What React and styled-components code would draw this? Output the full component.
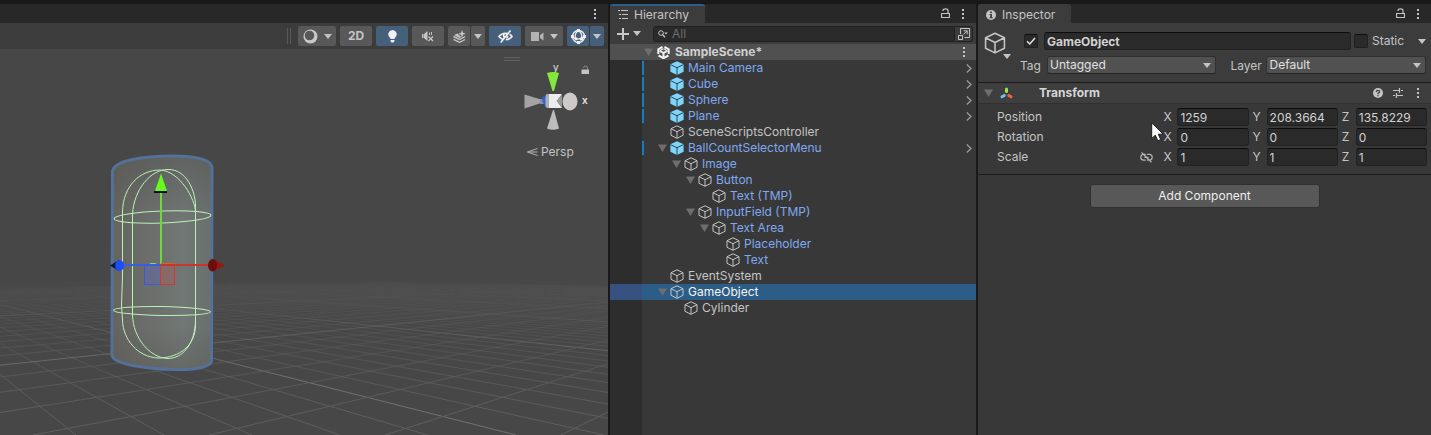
import React from "react";
import styled, { createGlobalStyle, css } from "styled-components";

const Global = createGlobalStyle`
  *, *::before, *::after { box-sizing: border-box; }
  body { margin: 0; background: #191919; }
  body, button, input, select {
    font-family: Inter, "Liberation Sans", sans-serif;
    font-size: 12px;
    line-height: 16px;
    color: #c4c4c4;
  }
  button { margin: 0; padding: 0; border: 0; background: none; }
  svg { display: block; flex: none; }
`;

/* ---------- shell ---------- */

const Editor = styled.main`
  display: grid;
  grid-template-columns: 608fr 366fr 453fr;
  column-gap: 2px;
  min-height: 100vh;
  padding-top: 4px;
  background: #191919;
`;

const Panel = styled.section`
  display: flex;
  flex-direction: column;
  min-width: 0;
  background: #383838;
`;

const TabBar = styled.header`
  display: flex;
  align-items: center;
  height: 19px;
  background: #282828;
`;

const Tab = styled.button`
  display: flex;
  align-items: center;
  gap: 6px;
  height: 19px;
  padding: 0 16px 0 8px;
  border-top: 2px solid ${(p) => (p.$focused ? "#2c5d87" : "#3c3c3c")};
  border-radius: 3px 3px 0 0;
  background: #3c3c3c;
`;

const TabTools = styled.div`
  display: flex;
  align-items: center;
  gap: 11px;
  margin-left: auto;
  padding-right: 11px;
`;

const IconButton = styled.button`
  display: flex;
  align-items: center;
  justify-content: center;
`;

/* ---------- scene ---------- */

const SceneToolbar = styled.div`
  display: flex;
  align-items: center;
  justify-content: flex-end;
  gap: 4px;
  height: 26px;
  padding: 0 4px;
  background: #3c3c3c;
`;

const Grip = styled.span`
  width: 4px;
  height: 16px;
  margin-right: 3px;
  border: solid #585858;
  border-width: 0 1px;
`;

const ToolButton = styled.button`
  display: flex;
  align-items: center;
  justify-content: center;
  gap: 6px;
  width: ${(p) => p.$w || 32}px;
  height: 20px;
  border-radius: 2px;
  font-weight: 700;
  background: ${(p) => (p.$on ? "#46607c" : "#585858")};
`;

const SplitGroup = styled.div`
  display: flex;
  gap: 1px;
`;

const Viewport = styled.div`
  position: relative;
  flex: 1;
  min-height: 0;
  overflow: hidden;
  background: #474747;
`;

const SceneArt = styled.svg`
  position: absolute;
  inset: 0;
  width: 100%;
  height: 100%;
`;

const Orientation = styled.div`
  position: absolute;
  top: 7px;
  right: 12px;
  display: flex;
  flex-direction: column;
  width: 92px;
`;

const Projection = styled.button`
  display: flex;
  align-items: center;
  gap: 3px;
  margin: 3px 0 0 23px;
`;

/* ---------- hierarchy ---------- */

const HierarchyTools = styled.div`
  display: flex;
  align-items: center;
  height: 21px;
  padding: 0 3px 0 7px;
  background: #3c3c3c;
`;

const CreateButton = styled(IconButton)`
  gap: 4px;
`;

const SearchBox = styled.label`
  display: flex;
  align-items: center;
  flex: 1;
  gap: 4px;
  height: 16px;
  margin-left: 12px;
  padding-left: 4px;
  border: 1px solid #202020;
  border-radius: 3px 0 0 3px;
  background: #2a2a2a;

  input {
    flex: 1;
    min-width: 0;
    height: 14px;
    padding: 0;
    border: 0;
    outline: 0;
    background: none;
  }
  input::placeholder { color: #6c6c6c; opacity: 1; }
`;

const PickerButton = styled(IconButton)`
  width: 18px;
  height: 16px;
  border: 1px solid #202020;
  border-left: 0;
  border-radius: 0 3px 3px 0;
`;

const Tree = styled.ul`
  flex: 1;
  margin: 0;
  padding: 0;
  list-style: none;
  background: linear-gradient(to right, #2d2d2d 32px, #383838 32px);
`;

const SceneRow = styled.li`
  display: flex;
  align-items: center;
  height: 16px;
  padding: 0 10px 0 34px;
  font-weight: 700;
  color: #d0d0d0;
  background: #505050;
`;

const SceneName = styled.span`
  flex: 1;
  margin-left: 5px;
`;

const Gutter = styled.span`
  align-self: stretch;
  width: 34px;
  margin-right: 14px;
  border-right: 2px solid transparent;
  ${(p) => p.$changed && css`
    background: linear-gradient(#0f81be, #0f81be) right 1px / 2px 14px no-repeat;
    background-origin: border-box;
    background-clip: border-box;
  `}
`;

const Fold = styled.span`
  display: flex;
  justify-content: center;
  width: 9px;
  margin-right: ${(p) => p.$gap || 3}px;
`;

const TreeRow = styled.li`
  display: flex;
  align-items: center;
  height: 16px;
  padding-right: 4px;
  color: ${(p) => (p.$selected ? "#f4f4f4" : p.$prefab ? "#7fa8f0" : "#c4c4c4")};
  ${(p) => p.$selected && css`
    background: linear-gradient(to right, #36507f 32px, #2c5d87 32px);
  `}
`;

const Indent = styled.span`
  width: ${(p) => p.$depth * 14}px;
`;

const RowName = styled.span`
  flex: 1;
  margin-left: 4px;
  white-space: nowrap;
`;

/* ---------- inspector ---------- */

const ObjectHeader = styled.div`
  display: grid;
  grid-template-columns: 28px minmax(0, 1fr);
  column-gap: 8px;
  padding: 9px 5px 8px 6px;
  background: #3c3c3c;
`;

const ObjectIcon = styled.button`
  display: flex;
  flex-direction: column;
  align-items: flex-end;
  align-self: start;
  padding-right: 1px;

  svg:first-child { align-self: flex-start; }
`;

const HeaderLines = styled.div`
  display: flex;
  flex-direction: column;
  gap: 6px;
`;

const HeaderLine = styled.div`
  display: flex;
  align-items: center;
  height: 18px;
`;

const fieldBox = css`
  height: 18px;
  border: 1px solid #212121;
  border-top-color: #0d0d0d;
  border-radius: 3px;
  background: #2a2a2a;
  color: #d2d2d2;
  outline: 0;
`;

const CheckBox = styled.span`
  position: relative;
  display: flex;
  flex: none;
  width: 14px;
  height: 14px;
  margin-left: ${(p) => (p.$lead ? 4 : 0)}px;

  input {
    appearance: none;
    width: 14px;
    height: 14px;
    margin: 0;
    border: 1px solid #212121;
    border-top-color: #0d0d0d;
    border-radius: 2px;
    background: #2a2a2a;
  }
  svg { position: absolute; inset: 0; display: none; pointer-events: none; }
  input:checked + svg { display: block; }
`;

const NameInput = styled.input`
  ${fieldBox}
  flex: 1;
  min-width: 0;
  margin: 0 3px 0 6px;
  padding: 0 2px;
  font-weight: 700;
`;

const StaticLabel = styled.label`
  width: 46px;
  margin-left: 4px;
`;

const FieldLabel = styled.label`
  width: ${(p) => p.$w}px;
  padding-top: 2px;
  padding-left: ${(p) => p.$lead || 0}px;
`;

const Dropdown = styled.span`
  position: relative;
  display: flex;
  flex: ${(p) => p.$grow} 0 0;
  align-items: center;

  select {
    appearance: none;
    width: 100%;
    height: 18px;
    padding: 0 18px 0 2px;
    border: 1px solid #303030;
    border-bottom-color: #242424;
    border-radius: 3px;
    background: #515151;
    color: #e0e0e0;
    line-height: 14px;
  }
  svg { position: absolute; right: 5px; pointer-events: none; }
`;

const ComponentHeader = styled.div`
  display: flex;
  align-items: center;
  height: 22px;
  padding: 0 8px 0 6px;
  border-top: 1px solid #1a1a1a;
  border-bottom: 1px solid #303030;
  background: #3e3e3e;

  h2 { flex: 1; margin: 0 0 0 24px; font-size: 12px; color: #d6d6d6; }
`;

const HeaderTools = styled.div`
  display: flex;
  align-items: center;
  gap: 10px;

  button { width: 10px; }
`;

const Properties = styled.div`
  display: flex;
  flex-direction: column;
  gap: 2px;
  padding: 4px 4px 8px 19px;
  border-bottom: 1px solid #1a1a1a;
`;

const PropertyRow = styled.div`
  position: relative;
  display: grid;
  grid-template-columns: 162fr 85fr 85fr 85fr;
  column-gap: 4px;
  align-items: center;
`;

const PropertyName = styled.span`
  display: flex;
  align-items: center;
  justify-content: space-between;
  padding-right: 6px;
`;

const AxisField = styled.label`
  display: flex;
  align-items: center;
  min-width: 0;

  span { width: 14px; }
  input { ${fieldBox} flex: 1; min-width: 0; padding: 0 2px; }
`;

const Pointer = styled.svg`
  position: absolute;
  top: 14px;
  left: 154px;
  z-index: 1;
`;

const AddComponent = styled.button`
  align-self: center;
  width: 51%;
  max-width: 230px;
  height: 24px;
  margin-top: 9px;
  border: 1px solid #303030;
  border-radius: 3px;
  background: #585858;
  color: #eeeeee;
`;

/* ---------- icons ---------- */

const Caret = ({ color = "#c4c4c4" }) => (
  <svg width="8" height="5" viewBox="0 0 8 5"><path d="M0 0h8L4 5z" fill={color} /></svg>
);

const FoldArrow = () => (
  <svg width="9" height="8" viewBox="0 0 9 8"><path d="M0 .5h9L4.500 8z" fill="#6e6e6e" /></svg>
);

const Dots = () => (
  <svg width="4" height="12" viewBox="0 0 4 12" fill="#c4c4c4">
    <path d="M1 1h2v2H1zM1 5h2v2H1zM1 9h2v2H1z" />
  </svg>
);

const Lock = () => (
  <svg width="9" height="11" viewBox="0 0 9 11" fill="none" stroke="#c4c4c4">
    <path d="M.5 5.500h8v4h-8zM2 3V2.500Q2 .8 4.500 .8T7 2.500V5.500" strokeWidth="1.200" />
  </svg>
);

const Cube = ({ prefab, size = 14 }) => (
  <svg width={size} height={size} viewBox="0 0 14 14" fill="none" strokeLinejoin="round">
    {prefab ? (
      <>
        <path d="M7 .2L13.600 3.300V10.700L7 14L.4 10.700V3.300z" fill="#7fd6fd" />
        <path d="M.5 3.600L7 6.700L13.500 3.600M7 6.700V14" stroke="#2b4552" />
      </>
    ) : (
      <path
        d="M7 .8L13 3.700V10.300L7 13.300L1 10.300V3.700zM1 3.700L7 6.700L13 3.700M7 6.700V13.300"
        stroke="#c4c4c4"
        strokeWidth="1"
      />
    )}
  </svg>
);

const Chevron = () => (
  <svg width="6" height="9" viewBox="0 0 6 9" fill="none" stroke="#9c9c9c" strokeWidth="1.300">
    <path d="M.8 .5L5 4.500L.8 8.500" />
  </svg>
);

const SceneLogo = () => (
  <svg width="13" height="13" viewBox="0 0 13 13" fill="none" stroke="#f4f4f4" strokeWidth="2">
    <path d="M6.500 6.500v5.500M6.500 7L2.500 4.600M6.500 7L10.500 4.600" />
    <path d="M5.500 .9L1.300 3.300V8M7.500 .9L11.700 3.300V8M1.600 9.500L6.500 12.200L11.400 9.500" />
    <path d="M4 4L6.300 2.800M9 4L6.700 2.800" strokeWidth="1.200" />
  </svg>
);

const ListIcon = () => (
  <svg width="10" height="9" viewBox="0 0 10 9" fill="#c4c4c4">
    <path d="M0 0h2v1H0zM3 0h7v1H3zM1 4h2v1H1zM4 4h6v1H4zM1 8h2v1H1zM4 8h6v1H4z" />
  </svg>
);

const InfoIcon = () => (
  <svg width="10" height="10" viewBox="0 0 10 10">
    <circle cx="5" cy="5" r="5" fill="#c4c4c4" />
    <path d="M4.200 1.500h1.700v1.500H4.200zM3.600 4h2.300v3.200h.8v1H3.500v-1h.8V5h-.7z" fill="#333" />
  </svg>
);

const PlusIcon = () => (
  <svg width="12" height="12" viewBox="0 0 12 12"><path d="M5 0h2v5h5v2H7v5H5V7H0V5h5z" fill="#c8c8c8" /></svg>
);

const SearchIcon = () => (
  <svg width="10" height="8" viewBox="0 0 10 8" fill="none" stroke="#c4c4c4">
    <circle cx="3" cy="3" r="2.300" /><path d="M4.700 4.700L7 7.300" strokeWidth="1.300" />
    <path d="M6.200 2.500h3.600L8 4.500z" fill="#c4c4c4" stroke="none" />
  </svg>
);

const PickerIcon = () => (
  <svg width="12" height="12" viewBox="0 0 12 12" fill="none" stroke="#c4c4c4">
    <path d="M2.500 6V.5h9v9H6.500M.5 7.500h4v4h-4zM5.500 6.500L9 3M5.800 2.800H9.200V6.200" />
  </svg>
);

const ShadingIcon = () => (
  <svg width="15" height="15" viewBox="0 0 15 15">
    <circle cx="7.500" cy="7.500" r="7" fill="#c8c8c8" />
    <circle cx="6.500" cy="6.500" r="4.800" fill="#585858" />
  </svg>
);

const BulbIcon = () => (
  <svg width="9" height="13" viewBox="0 0 9 13" fill="#f0f0f0">
    <path d="M4.500 0a4.200 4.200 0 0 1 2.700 7.400Q6.500 8 6.500 9h-4Q2.500 8 1.800 7.400A4.200 4.200 0 0 1 4.500 0zM2.500 10h4v1l-1 1.500h-2l-1-1.500z" />
  </svg>
);

const MuteIcon = () => (
  <svg width="12" height="11" viewBox="0 0 12 11" fill="#c4c4c4">
    <path d="M0 3h1.500v4H0zM2 3L5.500 0v10L2 7z" />
    <path d="M7.500 1.500v2.500M9.500 1v3" stroke="#c4c4c4" fill="none" />
    <path d="M6.500 5.500L11 10M11 5.500L6.500 10" stroke="#c4c4c4" strokeWidth="1.300" />
  </svg>
);

const EffectsIcon = () => (
  <svg width="13" height="13" viewBox="0 0 13 13" fill="#c4c4c4">
    <path d="M9 0l1 2.700 2.700 1-2.700 1-1 2.800-1-2.800-2.700-1 2.700-1z" />
    <path d="M4.500 3.500L1 5l5.500 3 2-1L6.500 5.500z" />
    <path d="M.5 6.500l6 3 5.500-2.800M.5 9.300l6 3 5.500-2.800" fill="none" stroke="#c4c4c4" strokeWidth="1.400" />
  </svg>
);

const HiddenIcon = () => (
  <svg width="15" height="13" viewBox="0 0 15 13" fill="none" stroke="#f0f0f0" strokeWidth="1.600">
    <path d="M5.200 9.500Q2.800 8.800 1 6.500Q3.500 3.300 7.500 3.200Q8.500 3.200 9.300 3.500M11.500 4.200Q13 5 14 6.500Q11.700 9.700 7.800 9.800M6.500 7.700Q5.500 7 5.600 5.500Q5.700 4 7 3.700M2.700 12.500L12.500 .5" />
    <path d="M8.500 8.300Q9.800 7.500 9.700 5.800" />
  </svg>
);

const CameraIcon = () => (
  <svg width="13" height="9" viewBox="0 0 13 9" fill="#b4b4b4">
    <path d="M0 0h8v9H0zM9 3L12.500 .5v8L9 6z" />
  </svg>
);

const GlobeIcon = () => (
  <svg width="15" height="15" viewBox="0 0 15 15" fill="none" stroke="#f0f0f0">
    <circle cx="7.500" cy="7.500" r="6" strokeWidth="1.400" />
    <path d="M7.500 1.500Q2.500 5 5 10M7.500 1.500Q12 5 10.500 10M1.500 8Q7 12.500 13.500 7.500" strokeWidth="1.200" />
    <path d="M6 0h3v3H6zM0 6h3v3H0zM12 6h3v3h-3zM6 12h3v3H6zM9 8.600h3v2.800H9zM3.800 8.600h2.600v2.600H3.800z" fill="#f0f0f0" stroke="none" />
  </svg>
);

const TransformIcon = () => (
  <svg width="19" height="13" viewBox="-4 0 19 13" fill="none" strokeWidth="3" strokeLinecap="round">
    <path d="M6.500 2V4.500" stroke="#9ae64c" />
    <path d="M4.300 8.500L2 9.800" stroke="#6cc4f2" />
    <path d="M8.700 8.500L11 9.800" stroke="#f0653a" />
  </svg>
);

const HelpIcon = () => (
  <svg width="10" height="10" viewBox="0 0 10 10">
    <circle cx="5" cy="5" r="5" fill="#c4c4c4" />
    <path d="M3.300 3.900Q3.300 2.300 5 2.300T6.700 3.800Q6.700 4.700 5 5.200V6.200M5 7v1.300" fill="none" stroke="#3e3e3e" strokeWidth="1.200" />
  </svg>
);

const PresetIcon = () => (
  <svg width="10" height="10" viewBox="0 0 10 10" fill="none" stroke="#c4c4c4">
    <path d="M0 2.500h6M8 2.500h2M6.500 0v5M0 7.500h2M4 7.500h6M3.500 5v5" strokeWidth="1.200" />
  </svg>
);

const UnlinkIcon = () => (
  <svg width="13" height="11" viewBox="0 0 13 11" fill="none" stroke="#b4b4b4" strokeWidth="1.200">
    <path d="M5.800 2.400H3.700A2.900 2.900 0 0 0 3.700 8.200H5.800M7.200 2.400H9.300A2.900 2.900 0 0 1 9.300 8.200H7.200M4.500 5.300h4M1.500 .5L11.500 10.300" />
  </svg>
);

const Check = () => (
  <svg width="14" height="14" viewBox="0 0 14 14" fill="none" stroke="#e4e4e4" strokeWidth="1.500">
    <path d="M3 7.300L5.800 10L11 4" />
  </svg>
);

/* ---------- scene drawing ---------- */

const HORIZON = 272;
const GROUND = 435;

const gridLines = (vanishX, start, step, from, to, majorAt) => {
  const lines = [];
  for (let k = from; k <= to; k += 1) {
    const major = (((k - majorAt) % 10) + 10) % 10 === 0;
    lines.push(
      <line
        key={k}
        x1={vanishX}
        y1={HORIZON}
        x2={start + step * k}
        y2={GROUND}
        stroke={major ? "url(#major)" : "url(#minor)"}
      />
    );
  }
  return lines;
};

const Fade = ({ id, color, from, to }) => (
  <linearGradient id={id} gradientUnits="userSpaceOnUse" x1="0" y1={from} x2="0" y2={to}>
    <stop offset="0" stopColor={color} stopOpacity="0" />
    <stop offset="1" stopColor={color} stopOpacity="1" />
  </linearGradient>
);

const TUBE =
  "M112.500 172C113 160 145 156 172 156C195 156 212 159 212 168L211.500 361C211 367 195 370 175 369.500C142 368.500 112.500 364 112 355Z";

const SceneDrawing = () => (
  <SceneArt viewBox="0 49 608 386" preserveAspectRatio="xMidYMid slice" aria-hidden="true">
    <defs>
      <Fade id="minor" color="#5d5d5d" from={280} to={410} />
      <Fade id="major" color="#707070" from={284} to={380} />
      <linearGradient id="body" x1="0" x2="1" y1="0" y2="0">
        <stop offset="0" stopColor="#65635d" />
        <stop offset=".25" stopColor="#696b67" />
        <stop offset=".7" stopColor="#717775" />
        <stop offset="1" stopColor="#69706d" />
      </linearGradient>
      <linearGradient id="shade" x1="0" x2="0" y1="0" y2="1">
        <stop offset="0" stopColor="#555" stopOpacity=".6" />
        <stop offset=".3" stopColor="#555" stopOpacity="0" />
        <stop offset=".8" stopColor="#555" stopOpacity="0" />
        <stop offset="1" stopColor="#5c5c58" stopOpacity=".5" />
      </linearGradient>
    </defs>
    <g>{gridLines(-128, 516, 88, -7, 90, 0)}</g>
    <g>{gridLines(895, 33, 176, -44, 5, -4)}</g>
    <path d={TUBE} fill="url(#body)" />
    <path d={TUBE} fill="url(#shade)" stroke="#557099" strokeWidth="3" />
    <g fill="none" stroke="#bdf0b8">
      <path d="M122.500 212C123 186 140 170 160 170C180 171 195.500 200 195.500 212V326C195 345 180 358 158 358C138 357 123 340 122.500 320L121.500 305L122.500 277Z" />
      <path d="M132.500 214C134 190 150 169.500 168 169.500C186 169 195 190 195.500 205V320C195 345 182 358.500 168 358.500C150 358 133 338 132.500 315Z" />
      <ellipse cx="162.500" cy="217" rx="48.500" ry="6" transform="rotate(-2 162.500 217)" />
      <ellipse cx="162" cy="311" rx="48.500" ry="4.500" transform="rotate(1 162 311)" />
    </g>
    <rect x="144.500" y="264.500" width="16" height="20" fill="#6068b0" fillOpacity=".5" stroke="#3c56e0" />
    <rect x="160.500" y="264.500" width="14" height="20" fill="#a06060" fillOpacity=".5" stroke="#d03a30" />
    <path d="M161 192V264" stroke="#71d83c" strokeWidth="2" />
    <path d="M154 192h13" stroke="#0b0b0b" strokeWidth="2" />
    <path d="M161 173.500L167 191H155z" fill="#66fa20" />
    <path d="M119 265h42" stroke="#3a5ce4" strokeWidth="2" />
    <path d="M161 265h50" stroke="#cc342c" strokeWidth="2" />
    <path d="M161 263.500h14" stroke="#c8691e" />
    <path d="M150 263.500h6" stroke="#7fe04c" />
    <path d="M110 265.500L119 260v11z" fill="#0c1638" />
    <ellipse cx="119.500" cy="265.500" rx="4.300" ry="5.500" fill="#1c4cff" />
    <path d="M213 259L225 265.500L213 271.500z" fill="#9c1510" />
    <ellipse cx="212.500" cy="265.300" rx="4.500" ry="6.200" fill="#6b0f0d" />
  </SceneArt>
);

/* Axis gizmo, drawn on the 92 by 85 area in the viewport's corner. */
const AxisGizmo = () => (
  <svg width="92" height="85" viewBox="504 56 92 85" role="img" aria-label="Scene orientation">
    <path d="M504 57.500h16M504 60.500h16" stroke="#5e5e5e" />
    <text x="553" y="71" fontSize="10" fill="#e0e0e0">y</text>
    <text x="582" y="104" fontSize="10" fontWeight="600" fill="#e0e0e0">x</text>
    <path d="M547 73Q553 71 559 73L554 91h-1.500z" fill="#84e83a" />
    <path d="M524.500 94.500L541 99.500v3.500L524.500 108.500z" fill="#a4a4a4" />
    <path d="M540 99h4v5h-4z" fill="#8291b0" />
    <path d="M543 96.500h5v9h-3q-4-4-2-9z" fill="#2f62d8" />
    <rect x="545.500" y="94" width="6" height="14" rx="2" fill="#a9aeb8" />
    <path d="M549 94h13l-5 7 5 7h-13z" fill="#ececec" />
    <path d="M562 94.500l-5.500 6.500 5.500 6.500z" fill="#9a9a9a" />
    <ellipse cx="570" cy="101.500" rx="7.500" ry="9" fill="#cfcaca" />
    <path d="M553 110h1L559 128.500Q553 131 547 128.500z" fill="#bcbcbc" />
    <path d="M581.500 69.500h7.500v4.500h-7.500z" fill="#c4c4c4" />
    <path d="M583.500 68q0-2 2-2t2 2v2" fill="none" stroke="#8c8c8c" />
  </svg>
);

const ScenePanel = () => (
  <Panel aria-label="Scene">
    <TabBar>
      <TabTools>
        <IconButton aria-label="Scene options"><Dots /></IconButton>
      </TabTools>
    </TabBar>
    <SceneToolbar role="toolbar">
      <Grip />
      <ToolButton $w={38} aria-label="Shading mode"><ShadingIcon /><Caret /></ToolButton>
      <ToolButton>2D</ToolButton>
      <ToolButton $on aria-label="Lighting"><BulbIcon /></ToolButton>
      <ToolButton aria-label="Audio"><MuteIcon /></ToolButton>
      <SplitGroup>
        <ToolButton $w={22} aria-label="Effects"><EffectsIcon /></ToolButton>
        <ToolButton $w={14} aria-label="Effects menu"><Caret /></ToolButton>
      </SplitGroup>
      <ToolButton $on aria-label="Scene visibility"><HiddenIcon /></ToolButton>
      <ToolButton $w={38} aria-label="Camera settings"><CameraIcon /><Caret /></ToolButton>
      <SplitGroup>
        <ToolButton $w={22} $on aria-label="Gizmos"><GlobeIcon /></ToolButton>
        <ToolButton $w={14} $on aria-label="Gizmos menu"><Caret /></ToolButton>
      </SplitGroup>
    </SceneToolbar>
    <Viewport>
      <SceneDrawing />
      <Orientation>
        <AxisGizmo />
        <Projection>
          <svg width="11" height="8" viewBox="0 0 11 8" fill="none" stroke="#b4b4b4">
            <path d="M10.500 .5L.5 4L10.500 7.500M.5 4h10" />
          </svg>
          Persp
        </Projection>
      </Orientation>
    </Viewport>
  </Panel>
);

/* ---------- hierarchy ---------- */

const NODES = [
  { name: "Main Camera", depth: 0, prefab: true, root: true },
  { name: "Cube", depth: 0, prefab: true, root: true },
  { name: "Sphere", depth: 0, prefab: true, root: true },
  { name: "Plane", depth: 0, prefab: true, root: true },
  { name: "SceneScriptsController", depth: 0 },
  { name: "BallCountSelectorMenu", depth: 0, prefab: true, root: true, open: true },
  { name: "Image", depth: 1, prefab: true, open: true },
  { name: "Button", depth: 2, prefab: true, open: true },
  { name: "Text (TMP)", depth: 3, prefab: true },
  { name: "InputField (TMP)", depth: 2, prefab: true, open: true },
  { name: "Text Area", depth: 3, prefab: true, open: true },
  { name: "Placeholder", depth: 4, prefab: true },
  { name: "Text", depth: 4, prefab: true },
  { name: "EventSystem", depth: 0 },
  { name: "GameObject", depth: 0, open: true, selected: true },
  { name: "Cylinder", depth: 1 },
];

const HierarchyPanel = () => (
  <Panel aria-label="Hierarchy">
    <TabBar>
      <Tab $focused><ListIcon />Hierarchy</Tab>
      <TabTools>
        <IconButton aria-label="Lock hierarchy"><Lock /></IconButton>
        <IconButton aria-label="Hierarchy options"><Dots /></IconButton>
      </TabTools>
    </TabBar>
    <HierarchyTools>
      <CreateButton aria-label="Create"><PlusIcon /><Caret /></CreateButton>
      <SearchBox>
        <SearchIcon />
        <input type="text" placeholder="All" aria-label="Search hierarchy" />
      </SearchBox>
      <PickerButton aria-label="Open search window"><PickerIcon /></PickerButton>
    </HierarchyTools>
    <Tree>
      <SceneRow>
        <Fold $gap={4}><FoldArrow /></Fold>
        <SceneLogo />
        <SceneName>SampleScene*</SceneName>
        <IconButton aria-label="Scene menu"><Dots /></IconButton>
      </SceneRow>
      {NODES.map((n) => (
        <TreeRow key={n.name} $prefab={n.prefab} $selected={n.selected}>
          <Gutter $changed={n.root} />
          <Indent $depth={n.depth} />
          <Fold>{n.open && <FoldArrow />}</Fold>
          <Cube prefab={n.root} />
          <RowName>{n.name}</RowName>
          {n.root && <Chevron />}
        </TreeRow>
      ))}
    </Tree>
  </Panel>
);

/* ---------- inspector ---------- */

const TRANSFORM = [
  { name: "Position", values: ["1259", "208.3664", "135.8229"], pointer: true },
  { name: "Rotation", values: ["0", "0", "0"] },
  { name: "Scale", values: ["1", "1", "1"], linkable: true },
];

const InspectorPanel = () => (
  <Panel aria-label="Inspector">
    <TabBar>
      <Tab><InfoIcon />Inspector</Tab>
      <TabTools>
        <IconButton aria-label="Lock inspector"><Lock /></IconButton>
        <IconButton aria-label="Inspector options"><Dots /></IconButton>
      </TabTools>
    </TabBar>
    <ObjectHeader>
      <ObjectIcon aria-label="Object icon"><Cube size={22} /><Caret /></ObjectIcon>
      <HeaderLines>
        <HeaderLine>
          <CheckBox $lead>
            <input type="checkbox" defaultChecked aria-label="Active" />
            <Check />
          </CheckBox>
          <NameInput type="text" defaultValue="GameObject" aria-label="Name" />
          <CheckBox>
            <input type="checkbox" id="static" />
            <Check />
          </CheckBox>
          <StaticLabel htmlFor="static">Static</StaticLabel>
          <IconButton aria-label="Static flags"><Caret /></IconButton>
        </HeaderLine>
        <HeaderLine>
          <FieldLabel $w={27} htmlFor="tag">Tag</FieldLabel>
          <Dropdown $grow={170}>
            <select id="tag" defaultValue="Untagged"><option>Untagged</option></select>
            <Caret />
          </Dropdown>
          <FieldLabel $w={50} $lead={14} htmlFor="layer">Layer</FieldLabel>
          <Dropdown $grow={160}>
            <select id="layer" defaultValue="Default"><option>Default</option></select>
            <Caret />
          </Dropdown>
        </HeaderLine>
      </HeaderLines>
    </ObjectHeader>
    <ComponentHeader>
      <Fold><FoldArrow /></Fold>
      <TransformIcon />
      <h2>Transform</h2>
      <HeaderTools>
        <IconButton aria-label="Help"><HelpIcon /></IconButton>
        <IconButton aria-label="Presets"><PresetIcon /></IconButton>
        <IconButton aria-label="Component menu"><Dots /></IconButton>
      </HeaderTools>
    </ComponentHeader>
    <Properties>
      {TRANSFORM.map((row) => (
        <PropertyRow key={row.name}>
          <PropertyName>
            {row.name}
            {row.linkable && <IconButton aria-label="Constrain proportions"><UnlinkIcon /></IconButton>}
          </PropertyName>
          {["X", "Y", "Z"].map((axis, i) => (
            <AxisField key={axis}>
              <span>{axis}</span>
              <input type="text" defaultValue={row.values[i]} aria-label={`${row.name} ${axis}`} />
            </AxisField>
          ))}
          {row.pointer && (
            <Pointer width="13" height="20" viewBox="0 0 13 20" aria-hidden="true">
              <path d="M.7 .8V16.500L4.300 13.200L6.800 18.800L9.700 17.500L7.300 12.200H12.200z" fill="#fff" stroke="#1c1c1c" />
            </Pointer>
          )}
        </PropertyRow>
      ))}
    </Properties>
    <AddComponent>Add Component</AddComponent>
  </Panel>
);

export default function App() {
  return (
    <>
      <Global />
      <Editor>
        <ScenePanel />
        <HierarchyPanel />
        <InspectorPanel />
      </Editor>
    </>
  );
}
